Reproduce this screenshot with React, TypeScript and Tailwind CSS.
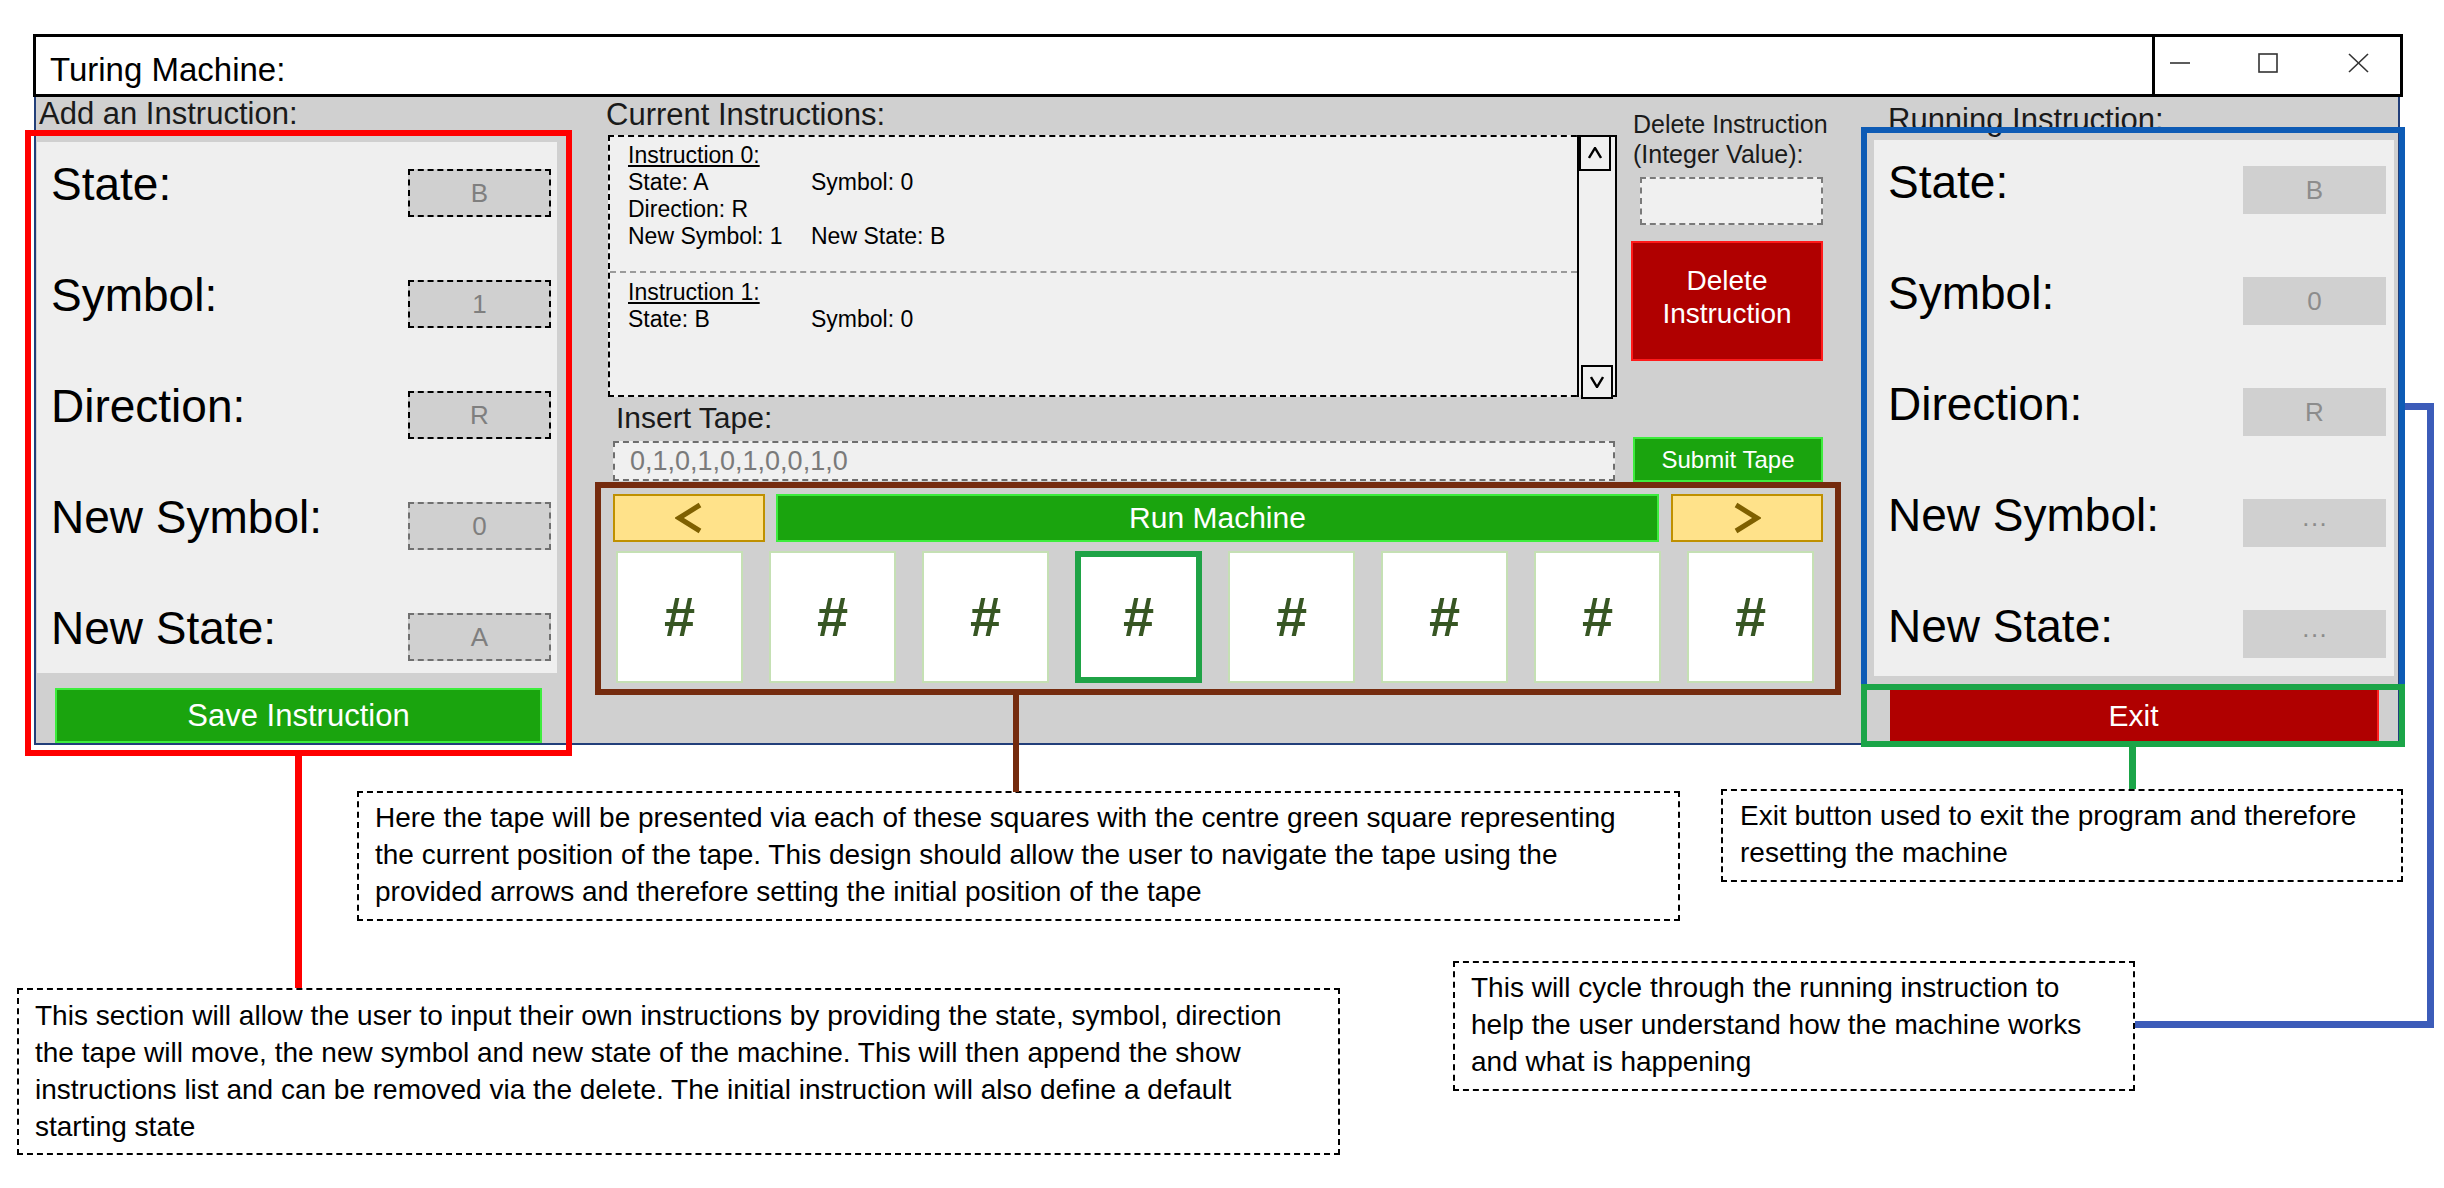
import React from "react";

type Row = { label: string; value: string; border?: string };

const addRows: Row[] = [
  { label: "State:", value: "B", border: "border-black" },
  { label: "Symbol:", value: "1", border: "border-black" },
  { label: "Direction:", value: "R", border: "border-black" },
  { label: "New Symbol:", value: "0", border: "border-[#707070]" },
  { label: "New State:", value: "A", border: "border-[#707070]" },
];

const runRows: Row[] = [
  { label: "State:", value: "B" },
  { label: "Symbol:", value: "0" },
  { label: "Direction:", value: "R" },
  { label: "New Symbol:", value: "···" },
  { label: "New State:", value: "···" },
];

const tape = ["#", "#", "#", "#", "#", "#", "#", "#"];
const headIndex = 3;

function WindowControls() {
  return (
    <div className="w-[248px] border-l-[3px] border-black flex items-start pt-[16px]">
      <svg className="ml-[15px]" width="20" height="20" viewBox="0 0 20 20">
        <line x1="0" y1="10" x2="20" y2="10" stroke="#333" strokeWidth="1.6" />
      </svg>
      <svg className="ml-[68px]" width="20" height="20" viewBox="0 0 20 20">
        <rect x="1" y="1" width="18" height="18" fill="none" stroke="#333" strokeWidth="1.6" />
      </svg>
      <svg className="ml-[70px]" width="21" height="20" viewBox="0 0 21 20">
        <line x1="1" y1="1" x2="20" y2="19" stroke="#333" strokeWidth="1.6" />
        <line x1="20" y1="1" x2="1" y2="19" stroke="#333" strokeWidth="1.6" />
      </svg>
    </div>
  );
}

function AddInstruction() {
  return (
    <div className="ml-px w-[520px] flex flex-col">
      <div className="h-[45px] pl-[2px] text-[31px] leading-[34px] text-[#1a1a1a] whitespace-nowrap">
        Add an Instruction:
      </div>
      <div className="h-[531px] bg-[#efefef] pt-[10px]">
        {addRows.map((row) => (
          <div key={row.label} className="h-[111px] flex items-start pl-[14px] pr-[6px]">
            <span className="mt-[4px] text-[46px] leading-[56px] whitespace-nowrap">{row.label}</span>
            <div
              className={`ml-auto mt-[17px] w-[143px] h-[48px] bg-[#d0d0d0] border-2 border-dashed ${row.border} flex items-center justify-center text-[26px] text-[#7f7f7f]`}
            >
              {row.value}
            </div>
          </div>
        ))}
      </div>
      <button className="mt-[15px] ml-[18px] w-[487px] h-[55px] bg-[#1aa40e] border-2 border-[#3ded3d] text-white text-[31px] leading-none">
        Save Instruction
      </button>
    </div>
  );
}

function Caret({ up }: { up?: boolean }) {
  return (
    <svg width="14" height="12" viewBox="0 0 14 12">
      <polyline
        points={up ? "1,11 7,1 13,11" : "1,1 7,11 13,1"}
        fill="none"
        stroke="#000"
        strokeWidth="2.4"
      />
    </svg>
  );
}

function InstructionList() {
  return (
    <div className="ml-[13px] w-[1009px] h-[262px] border-2 border-dashed border-black bg-[#f0f0f0] flex">
      <div className="flex-1 text-[23px] leading-[27px]">
        <div className="pl-[18px] pt-[5px] pb-[21px] border-b-2 border-dashed border-[#9a9a9a]">
          <div className="underline decoration-2 underline-offset-2">Instruction 0:</div>
          <div className="grid grid-cols-[183px_auto]">
            <span>State: A</span>
            <span>Symbol: 0</span>
            <span>Direction: R</span>
            <span></span>
            <span>New Symbol: 1</span>
            <span>New State: B</span>
          </div>
        </div>
        <div className="pl-[18px] pt-[6px]">
          <div className="underline decoration-2 underline-offset-2">Instruction 1:</div>
          <div className="grid grid-cols-[183px_auto]">
            <span>State: B</span>
            <span>Symbol: 0</span>
          </div>
        </div>
      </div>
      <div className="w-[40px] -mr-[2px] -my-[2px] border-x-2 border-black flex flex-col">
        <div className="w-[32px] h-[36px] border-2 border-black bg-[#f0f0f0] flex items-center justify-center">
          <Caret up />
        </div>
        <div className="mt-auto ml-[2px] -mb-[2px] w-[32px] h-[34px] border-2 border-black bg-[#f0f0f0] flex items-center justify-center">
          <Caret />
        </div>
      </div>
    </div>
  );
}

function Arrow({ left }: { left?: boolean }) {
  return (
    <svg width="28" height="32" viewBox="0 0 28 32">
      <polyline
        points={left ? "25,3 4,16 25,29" : "3,3 24,16 3,29"}
        fill="none"
        stroke="#7f6000"
        strokeWidth="5"
      />
    </svg>
  );
}

function TapeSection() {
  return (
    <div className="h-[213px] border-[6px] border-[#752b0e] flex flex-col">
      <div className="mt-[6px] flex h-[48px]">
        <button className="ml-[12px] w-[152px] h-[48px] bg-[#ffe28a] border-2 border-[#bf9000] flex items-center justify-center">
          <Arrow left />
        </button>
        <button className="ml-[11px] w-[883px] h-[48px] bg-[#1aa40e] border-2 border-[#3ded3d] text-white text-[30px] leading-none">
          Run Machine
        </button>
        <button className="ml-[12px] w-[152px] h-[48px] bg-[#ffe28a] border-2 border-[#bf9000] flex items-center justify-center">
          <Arrow />
        </button>
      </div>
      <div className="mt-[9px] ml-[15px] flex gap-[26px]">
        {tape.map((sym, i) => (
          <div
            key={i}
            className={
              i === headIndex
                ? "w-[127px] h-[132px] bg-white border-[6px] border-[#1fa346] flex items-center justify-center text-[56px] font-bold text-[#375623]"
                : "w-[127px] h-[132px] bg-white border-2 border-[#c5e0b4] flex items-center justify-center text-[56px] font-bold text-[#375623]"
            }
          >
            {sym}
          </div>
        ))}
      </div>
    </div>
  );
}

function Middle() {
  return (
    <div className="ml-[38px] w-[1246px] flex flex-col">
      <div className="flex h-[300px]">
        <div className="w-[1022px]">
          <div className="h-[38px] pl-[11px] pt-px text-[31px] leading-[34px] text-[#1a1a1a] whitespace-nowrap">
            Current Instructions:
          </div>
          <InstructionList />
        </div>
        <div className="ml-[14px] w-[210px] flex flex-col">
          <div className="mt-[12px] ml-[2px] text-[25px] leading-[30px] text-[#1a1a1a] whitespace-nowrap">
            Delete Instruction
            <br />
            (Integer Value):
          </div>
          <div className="mt-[8px] ml-[9px] w-[183px] h-[48px] border-2 border-dashed border-[#7a7a7a] bg-[#f0f0f0]" />
          <button className="mt-[16px] w-[192px] h-[120px] bg-[#b00000] border-2 border-[#ff1a1a] text-white text-[28px] leading-[33px] pb-[8px]">
            Delete
            <br />
            Instruction
          </button>
        </div>
      </div>
      <div className="h-[40px] pl-[21px] pt-[4px] text-[30px] leading-[34px] text-[#1a1a1a]">Insert Tape:</div>
      <div className="flex h-[45px]">
        <div className="mt-[4px] ml-[18px] w-[1002px] h-[40px] border-2 border-dashed border-[#6e6e6e] bg-[#f0f0f0] flex items-center pl-[15px] text-[27px] text-[#7a7a7a]">
          0,1,0,1,0,1,0,0,1,0
        </div>
        <button className="ml-[18px] w-[190px] h-[45px] bg-[#1aa40e] border-2 border-[#3ded3d] text-white text-[24px] leading-none">
          Submit Tape
        </button>
      </div>
      <TapeSection />
    </div>
  );
}

function RunningInstruction() {
  return (
    <div className="ml-[33px] w-[520px] flex flex-col">
      <div className="h-[43px] pl-[14px] pt-[6px] text-[31px] leading-[34px] text-[#1a1a1a] whitespace-nowrap">
        Running Instruction:
      </div>
      <div className="h-[536px] bg-[#efefef] pt-[10px]">
        {runRows.map((row) => (
          <div key={row.label} className="h-[111px] flex items-start pl-[14px] pr-[8px]">
            <span className="mt-[4px] text-[46px] leading-[56px] whitespace-nowrap">{row.label}</span>
            <div className="ml-auto mt-[16px] w-[143px] h-[48px] bg-[#d0d0d0] flex items-center justify-center text-[26px] text-[#8c8c8c]">
              {row.value}
            </div>
          </div>
        ))}
      </div>
      <button className="mt-[14px] ml-[16px] w-[489px] h-[52px] bg-[#b00000] border-r-2 border-[#ff2020] text-white text-[30px] leading-none">
        Exit
      </button>
    </div>
  );
}

function Note({ className, lines }: { className: string; lines: string[] }) {
  return (
    <div
      className={`absolute bg-white border-2 border-dashed border-black text-[28px] leading-[37px] whitespace-nowrap ${className}`}
    >
      {lines.map((l) => (
        <div key={l}>{l}</div>
      ))}
    </div>
  );
}

function Overlay() {
  return (
    <svg className="absolute left-0 top-0 pointer-events-none" width="2444" height="1188" viewBox="0 0 2444 1188">
      {/* add instruction highlight */}
      <rect x="28" y="133" width="541" height="620" fill="none" stroke="#ff0000" strokeWidth="6" />
      <rect x="295" y="756" width="7" height="232" fill="#ff0000" />
      {/* tape connector */}
      <rect x="1013" y="695" width="6" height="97" fill="#752b0e" />
      {/* running instruction highlight */}
      <path d="M1864 684 V130 H2402 V684" fill="none" stroke="#0d5bb5" strokeWidth="6" />
      <polyline
        points="2405,406.5 2430.5,406.5 2430.5,1024.5 2135,1024.5"
        fill="none"
        stroke="#3c5cb9"
        strokeWidth="7"
      />
      {/* exit highlight */}
      <rect x="1864" y="687" width="538" height="57" fill="none" stroke="#1ba548" strokeWidth="6" />
      <rect x="2129" y="747" width="7" height="42" fill="#1ba548" />
    </svg>
  );
}

export default function App() {
  return (
    <div className="relative w-[2444px] h-[1188px] bg-white overflow-hidden font-['Liberation_Sans',Arial,sans-serif] text-black">
      <div className="ml-[33px] pt-[34px] w-[2370px]">
        <div className="h-[63px] border-[3px] border-black bg-white flex">
          <div className="flex-1 pl-[14px] pt-[14px] text-[33px] leading-[38px]">Turing Machine:</div>
          <WindowControls />
        </div>
        <div className="ml-px w-[2366px] h-[648px] bg-[#d0d0d0] border-2 border-t-0 border-[#223f7a] flex">
          <AddInstruction />
          <Middle />
          <RunningInstruction />
        </div>
      </div>

      <Note
        className="left-[357px] top-[791px] w-[1323px] h-[130px] pl-[16px] pt-[6px]"
        lines={[
          "Here the tape will be presented via each of these squares with the centre green square representing",
          "the current position of the tape. This design should allow the user to navigate the tape using the",
          "provided arrows and therefore setting the initial position of the tape",
        ]}
      />
      <Note
        className="left-[17px] top-[988px] w-[1323px] h-[167px] pl-[16px] pt-[7px]"
        lines={[
          "This section will allow the user to input their own instructions by providing the state, symbol, direction",
          "the tape will move, the new symbol and new state of the machine. This will then append the show",
          "instructions list and can be removed via the delete. The initial instruction will also define a default",
          "starting state",
        ]}
      />
      <Note
        className="left-[1721px] top-[789px] w-[682px] h-[93px] pl-[17px] pt-[6px]"
        lines={["Exit button used to exit the program and therefore", "resetting the machine"]}
      />
      <Note
        className="left-[1453px] top-[961px] w-[682px] h-[130px] pl-[16px] pt-[6px]"
        lines={[
          "This will cycle through the running instruction to",
          "help the user understand how the machine works",
          "and what is happening",
        ]}
      />

      <Overlay />
    </div>
  );
}
